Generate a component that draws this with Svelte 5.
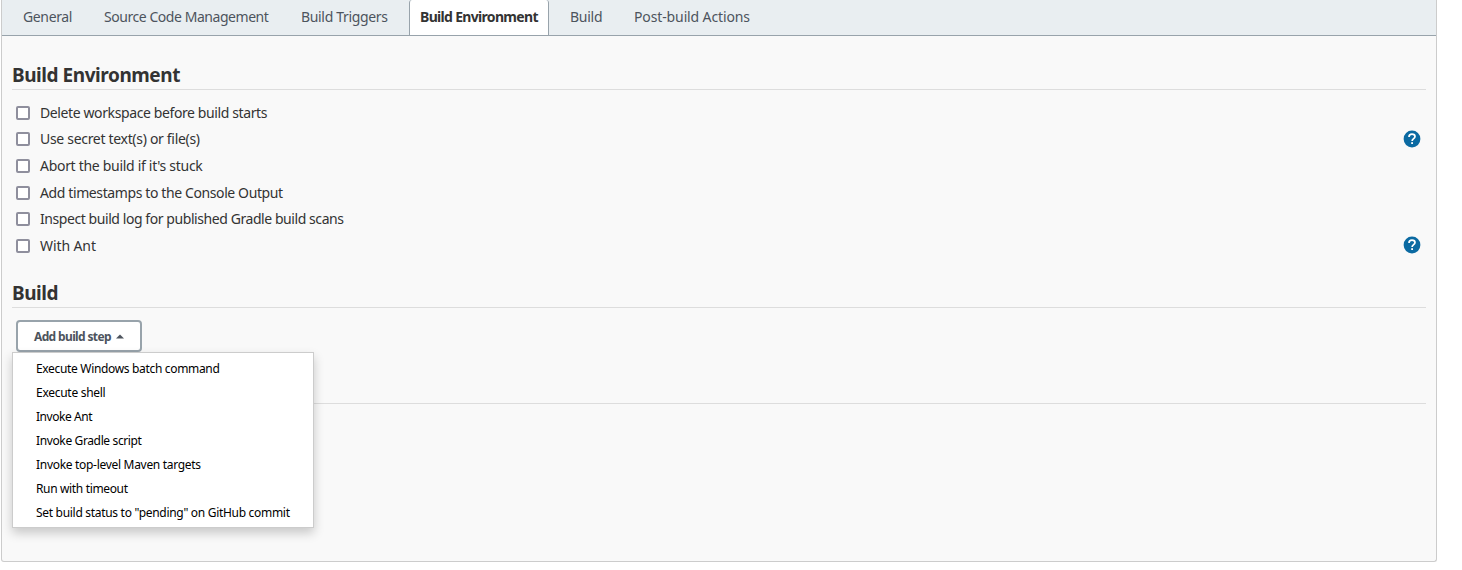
<script>
  const tabs = [
    { label: 'General', w: 71, track: -0.36 },
    { label: 'Source Code Management', w: 187, track: -0.45 },
    { label: 'Build Triggers', w: 109, track: -0.33 },
    { label: 'Build Environment', w: 140, track: -0.68, active: true },
    { label: 'Build', w: 54, track: -0.25 },
    { label: 'Post-build Actions', w: 138, track: -0.12 }
  ];
  const options = [
    { label: 'Delete workspace before build starts', h: 26, track: -0.39 },
    { label: 'Use secret text(s) or file(s)', h: 27, track: -0.31, help: true },
    { label: 'Abort the build if it\'s stuck', h: 27, track: -0.3 },
    { label: 'Add timestamps to the Console Output', h: 26, track: -0.39 },
    { label: 'Inspect build log for published Gradle build scans', h: 27, track: -0.43 },
    { label: 'With Ant', h: 27, track: -0.1, help: true }
  ];
  const steps = [
    { label: 'Execute Windows batch command', track: -0.33 },
    { label: 'Execute shell', track: -0.28 },
    { label: 'Invoke Ant', track: -0.45 },
    { label: 'Invoke Gradle script', track: -0.37 },
    { label: 'Invoke top-level Maven targets', track: -0.3 },
    { label: 'Run with timeout', track: -0.35 },
    { label: 'Set build status to "pending" on GitHub commit', track: -0.3 }
  ];
</script>

<main class="panel">
  <nav class="tabs">
    {#each tabs as tab}
      <div class="tab" class:active={tab.active} style="width: {tab.w}px; letter-spacing: {tab.track}px">{tab.label}</div>
    {/each}
  </nav>
  <section class="environment">
    <h2>Build Environment</h2>
    <div class="options">
      {#each options as option}
        <div class="option" style="height: {option.h}px">
          <span class="box"></span>
          <span class="label" style="letter-spacing: {option.track}px">{option.label}</span>
          {#if option.help}
            <svg class="help" width="18" height="18" viewBox="0 0 18 18">
              <circle cx="9" cy="9" r="8.4" fill="#0b6aa2" />
              <path d="M6 6.9C6 5.2 7.2 4.2 9 4.2s3 1 3 2.4c0 2-2.9 2.2-2.9 4.4" fill="none" stroke="#fff" stroke-width="1.7" />
              <rect x="8.2" y="12.2" width="1.8" height="1.8" fill="#fff" />
            </svg>
          {/if}
        </div>
      {/each}
    </div>
  </section>
  <section class="build">
    <h2>Build</h2>
    <div class="step-wrap">
      <button type="button"><span>Add build step</span><svg width="8" height="5" viewBox="0 0 8 5"><path d="M0 4.5 4 .5l4 4z" fill="#4d545d" /></svg></button>
      <div class="menu">
        {#each steps as step}
          <div class="item" style="letter-spacing: {step.track}px">{step.label}</div>
        {/each}
      </div>
    </div>
  </section>
  <div class="rule"></div>
</main>

<style>
  :global(body) {
    background: #fff;
  }
  .panel {
    box-sizing: border-box;
    width: 1436px;
    height: 562px;
    margin-left: 1px;
    border: 1px solid #ccc;
    border-top: 0;
    border-radius: 0 0 3px 3px;
    background: #f9f9f9;
    color: #333;
    font: 14px/20px 'Noto Sans', sans-serif;
  }
  .tabs {
    display: flex;
    gap: 10px;
    box-sizing: border-box;
    height: 36px;
    padding-left: 10px;
    border-bottom: 1px solid #98a3ab;
    background: #e9eef1;
    color: #4d545d;
  }
  .tab {
    box-sizing: border-box;
    flex: none;
    height: 35px;
    padding: 7px 0 0 11px;
    white-space: nowrap;
  }
  .tab.active {
    padding-left: 10px;
    border: 1px solid #98a3ab;
    border-width: 0 1px;
    border-radius: 3px 3px 0 0;
    background: #fff;
    color: #333;
    font-weight: 700;
  }
  section {
    margin: 0 10px;
  }
  h2 {
    box-sizing: border-box;
    height: 30px;
    margin: 0;
    border-bottom: 1px solid #ddd;
    font: 700 19px/31px 'Noto Sans', sans-serif;
    letter-spacing: -0.45px;
  }
  .environment {
    padding-top: 24px;
  }
  .options {
    padding-top: 10px;
  }
  .option {
    display: flex;
    align-items: flex-start;
    box-sizing: border-box;
    padding: 3px 5px 0 4px;
  }
  .box {
    box-sizing: border-box;
    width: 14px;
    height: 14px;
    margin: 3px 10px 0 0;
    border: 2px solid #8f8f9d;
    border-radius: 2px;
    background: #fff;
  }
  .help {
    margin: 1px 0 0 auto;
  }
  .option:last-child .help {
    margin-top: 0;
  }
  .build {
    box-sizing: border-box;
    height: 143px;
    padding-top: 18px;
  }
  .step-wrap {
    position: relative;
    padding: 12px 0 0 4px;
  }
  button {
    display: flex;
    align-items: center;
    gap: 5px;
    box-sizing: border-box;
    width: 126px;
    height: 32px;
    padding: 0 0 0 16px;
    border: 2px solid #98a3ab;
    border-radius: 4px;
    background: #fff;
    color: #4d545d;
    font: 700 12px/18px 'Noto Sans', sans-serif;
    letter-spacing: -0.64px;
  }
  button span {
    padding-top: 2px;
  }
  .menu {
    position: absolute;
    top: 44px;
    left: 0;
    box-sizing: border-box;
    width: 302px;
    height: 176px;
    padding: 4px 0;
    border: 1px solid #ccc;
    background: #fff;
    box-shadow: 0 5px 10px rgba(0, 0, 0, 0.2);
    color: #000;
    font-size: 12px;
    line-height: 24px;
  }
  .item {
    padding-left: 23px;
    white-space: nowrap;
  }
  .rule {
    height: 1px;
    margin: 0 10px;
    background: #ddd;
  }
</style>
